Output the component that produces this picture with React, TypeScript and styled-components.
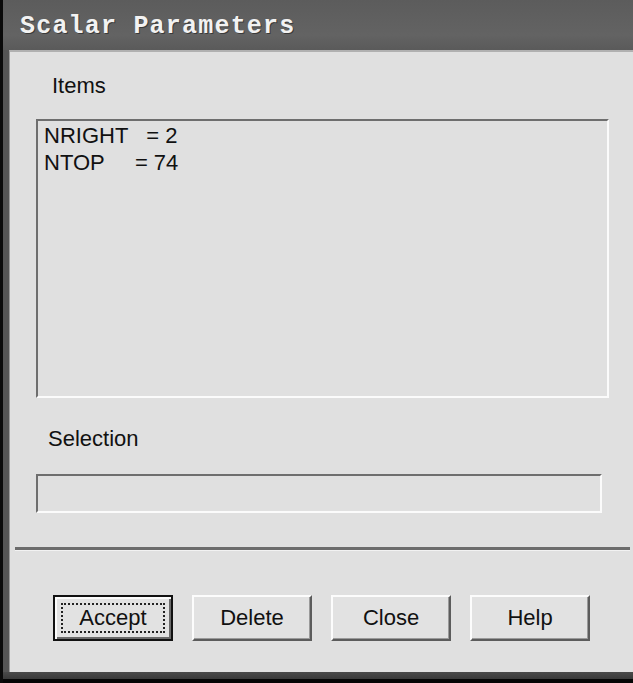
import React from "react";
import styled, { createGlobalStyle } from "styled-components";

const Global = createGlobalStyle`
  html, body { margin: 0; padding: 0; background: #000; }
  #root { width: 633px; height: 683px; }
`;

const Frame = styled.div`
  width: 633px;
  height: 683px;
  box-sizing: border-box;
  display: flex;
  flex-direction: column;
  border-left: 3px solid #0a0a0a;
  background: #555;
  overflow: hidden;
`;

const TitleBar = styled.div`
  height: 50px;
  flex: none;
  display: flex;
  align-items: center;
  padding-left: 17px;
  background: linear-gradient(#5c5c5c, #636363 70%, #5a5a5a);
`;

const Title = styled.span`
  font-family: "Liberation Mono", "Courier New", monospace;
  font-weight: bold;
  font-size: 25px;
  letter-spacing: 1.2px;
  color: #f2f2f2;
  text-shadow: 1px 1px 0 #3a3a3a;
  margin-top: 2px;
`;

const Client = styled.div`
  flex: 1;
  margin-left: 6px;
  border-top: 2px solid #b0b0b0;
  border-left: 1px solid #9a9a9a;
  background: #e0e0e0;
  display: flex;
  flex-direction: column;
  font-family: "Liberation Sans", Arial, sans-serif;
  color: #111;
`;

const BottomEdge = styled.div`
  flex: none;
  height: 11px;
  background: linear-gradient(#4a4a4a, #3a3a3a 60%, #050505 60%);
`;

const Label = styled.div<{ $indent: number; $top: number }>`
  font-size: 22px;
  line-height: 24px;
  margin-left: ${(p) => p.$indent}px;
  margin-top: ${(p) => p.$top}px;
`;

const ListBox = styled.div`
  margin: 21px 0 0 26px;
  width: 573px;
  height: 279px;
  box-sizing: border-box;
  border-style: solid;
  border-width: 2px;
  border-color: #6e6e6e #fbfbfb #fbfbfb #6e6e6e;
  padding: 2px 6px;
  font-size: 22px;
  line-height: 26.5px;
`;

const ListItem = styled.div`
  white-space: pre;
`;

const TextBox = styled.div`
  margin: 23px 0 0 26px;
  width: 566px;
  height: 39px;
  box-sizing: border-box;
  border-style: solid;
  border-width: 2px;
  border-color: #6e6e6e #fbfbfb #fbfbfb #6e6e6e;
`;

const Separator = styled.div`
  margin: 34px 0 0 5px;
  width: 615px;
  height: 3px;
  background: #6c6c6c;
  border-bottom: 1px solid #f2f2f2;
`;

const ButtonRow = styled.div`
  display: flex;
  gap: 19px;
  margin: 44px 0 0 43px;
`;

const Button = styled.div<{ $default?: boolean }>`
  width: 120px;
  height: 46px;
  box-sizing: border-box;
  display: flex;
  align-items: center;
  justify-content: center;
  font-size: 22px;
  background: #e2e2e2;
  border-style: solid;
  border-width: 2px;
  border-color: ${(p) =>
    p.$default ? "#111 #111 #111 #111" : "#fcfcfc #5c5c5c #5c5c5c #fcfcfc"};
  box-shadow: ${(p) =>
    p.$default
      ? "inset 2px 2px 0 #fbfbfb, inset -2px -2px 0 #6a6a6a"
      : "inset -1px -1px 0 #9a9a9a"};
  position: relative;
`;

const FocusRing = styled.span`
  position: absolute;
  inset: 6px;
  border: 2px dotted #222;
`;

export default function App() {
  return (
    <>
      <Global />
      <Frame>
        <TitleBar>
          <Title>Scalar Parameters</Title>
        </TitleBar>
        <Client>
          <Label $indent={42} $top={22}>Items</Label>
          <ListBox>
            <ListItem>{"NRIGHT   = 2"}</ListItem>
            <ListItem>{"NTOP     = 74"}</ListItem>
          </ListBox>
          <Label $indent={38} $top={29}>Selection</Label>
          <TextBox />
          <Separator />
          <ButtonRow>
            <Button $default>
              <FocusRing />
              Accept
            </Button>
            <Button>Delete</Button>
            <Button>Close</Button>
            <Button>Help</Button>
          </ButtonRow>
        </Client>
        <BottomEdge />
      </Frame>
    </>
  );
}
